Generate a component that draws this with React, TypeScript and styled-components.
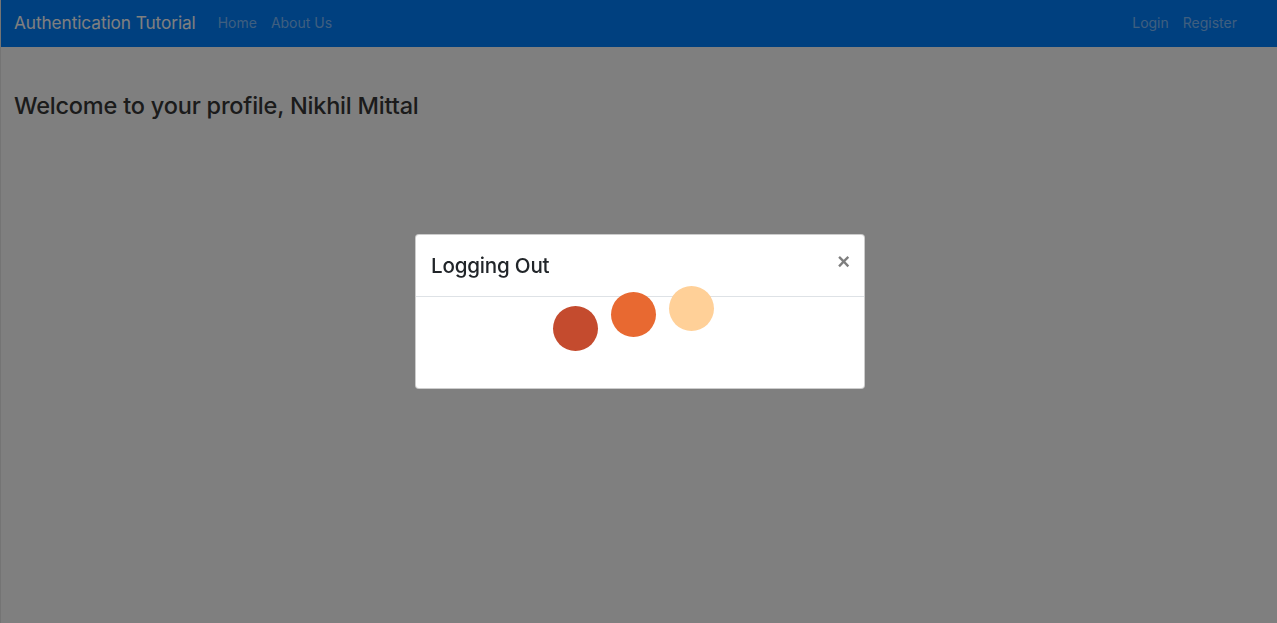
import React from "react";
import styled, { createGlobalStyle } from "styled-components";

const Global = createGlobalStyle`
  html, body { margin: 0; padding: 0; height: 100%; }
  body {
    font-family: Inter, "Noto Sans", "Liberation Sans", sans-serif;
    background: #ffffff;
    color: #333333;
    overflow: hidden;
  }
  #root { height: 100%; }
`;

const Page = styled.div`
  height: 623px;
  display: flex;
  flex-direction: column;
  border-left: 1px solid #e8e8e8;
  box-sizing: border-box;
`;

const NavBar = styled.nav`
  height: 47px;
  background: #0080ff;
  display: flex;
  align-items: center;
  padding: 0 40px 2px 13px;
  box-sizing: border-box;
`;

const Brand = styled.a`
  font-size: 17.3px;
  color: #ffffff;
  margin-right: 22px;
  letter-spacing: -0.1px;
`;

const NavGroup = styled.div<{ $right?: boolean }>`
  display: flex;
  gap: 14px;
  margin-left: ${(p) => (p.$right ? "auto" : "0")};
`;

const NavLink = styled.a`
  font-size: 14px;
  color: rgba(255, 255, 255, 0.5);
`;

const Content = styled.main`
  padding: 45px 13px 0;
`;

const Heading = styled.h3`
  margin: 0;
  font-size: 23.5px;
  font-weight: 500;
  line-height: 1.2;
  color: #363636;
  letter-spacing: -0.2px;
`;

const Backdrop = styled.div`
  position: fixed;
  inset: 0;
  background: rgba(0, 0, 0, 0.5);
  display: flex;
  justify-content: center;
  align-items: flex-start;
  padding-top: 234px;
  padding-left: 3px;
`;

const Modal = styled.div`
  width: 450px;
  background: #ffffff;
  border: 1px solid rgba(0, 0, 0, 0.2);
  border-radius: 4px;
  box-sizing: border-box;
`;

const ModalHeader = styled.div`
  display: flex;
  align-items: center;
  justify-content: space-between;
  padding: 16px 15px 15px 15px;
  border-bottom: 1px solid #dee2e6;
`;

const ModalTitle = styled.h5`
  margin: 0;
  font-size: 20.6px;
  font-weight: 500;
  line-height: 30px;
  color: #212529;
  letter-spacing: -0.2px;
`;

const CloseButton = styled.button`
  border: none;
  background: transparent;
  padding: 0;
  margin-top: -8px;
  margin-right: -1px;
  font-size: 22px;
  font-weight: 700;
  line-height: 1;
  color: #000;
  opacity: 0.5;
  font-family: "Liberation Sans", Arial, sans-serif;
  cursor: pointer;
`;

const ModalBody = styled.div`
  height: 91px;
  display: flex;
  justify-content: center;
  align-items: flex-start;
  gap: 13px;
  padding-top: 9px;
  padding-right: 14px;
  box-sizing: border-box;
`;

const Dot = styled.span<{ $color: string; $lift: number }>`
  width: 45px;
  height: 45px;
  border-radius: 50%;
  background: ${(p) => p.$color};
  transform: translateY(${(p) => -p.$lift}px);
  flex: none;
`;

export default function App() {
  return (
    <>
      <Global />
      <Page>
        <NavBar>
          <Brand>Authentication Tutorial</Brand>
          <NavGroup>
            <NavLink>Home</NavLink>
            <NavLink>About Us</NavLink>
          </NavGroup>
          <NavGroup $right>
            <NavLink>Login</NavLink>
            <NavLink>Register</NavLink>
          </NavGroup>
        </NavBar>
        <Content>
          <Heading>Welcome to your profile, Nikhil Mittal</Heading>
        </Content>
      </Page>
      <Backdrop>
        <Modal>
          <ModalHeader>
            <ModalTitle>Logging Out</ModalTitle>
            <CloseButton aria-label="Close">×</CloseButton>
          </ModalHeader>
          <ModalBody>
            <Dot $color="#c44b2e" $lift={0} />
            <Dot $color="#e86931" $lift={14} />
            <Dot $color="#ffd098" $lift={20} />
          </ModalBody>
        </Modal>
      </Backdrop>
    </>
  );
}
